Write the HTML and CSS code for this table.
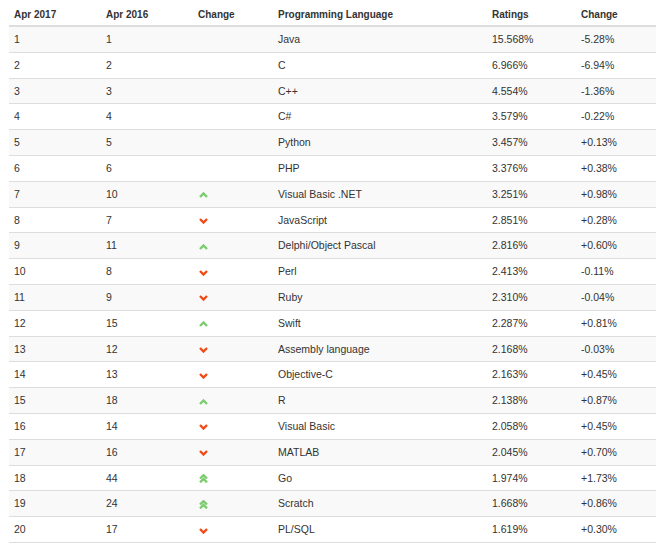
FILE: index.html
```html
<!DOCTYPE html>
<html>
<head>
<meta charset="utf-8">
<link rel="stylesheet" href="styles.css">
</head>
<body>
<div class="wrap">
<table class="rank">
<colgroup>
<col class="c1"><col class="c2"><col class="c3"><col class="c4"><col class="c5"><col class="c6">
</colgroup>
<thead>
<tr><th>Apr 2017</th><th>Apr 2016</th><th>Change</th><th>Programming Language</th><th>Ratings</th><th>Change</th></tr>
</thead>
<tbody>
<tr><td>1</td><td>1</td><td></td><td>Java</td><td>15.568%</td><td>-5.28%</td></tr>
<tr><td>2</td><td>2</td><td></td><td>C</td><td>6.966%</td><td>-6.94%</td></tr>
<tr><td>3</td><td>3</td><td></td><td>C++</td><td>4.554%</td><td>-1.36%</td></tr>
<tr><td>4</td><td>4</td><td></td><td>C#</td><td>3.579%</td><td>-0.22%</td></tr>
<tr><td>5</td><td>5</td><td></td><td>Python</td><td>3.457%</td><td>+0.13%</td></tr>
<tr><td>6</td><td>6</td><td></td><td>PHP</td><td>3.376%</td><td>+0.38%</td></tr>
<tr><td>7</td><td>10</td><td><svg class="ico up" viewBox="0 0 9 6"><path d="M1 5 L4.5 1.5 L8 5"/></svg></td><td>Visual Basic .NET</td><td>3.251%</td><td>+0.98%</td></tr>
<tr><td>8</td><td>7</td><td><svg class="ico down" viewBox="0 0 9 6"><path d="M1 1 L4.5 4.5 L8 1"/></svg></td><td>JavaScript</td><td>2.851%</td><td>+0.28%</td></tr>
<tr><td>9</td><td>11</td><td><svg class="ico up" viewBox="0 0 9 6"><path d="M1 5 L4.5 1.5 L8 5"/></svg></td><td>Delphi/Object Pascal</td><td>2.816%</td><td>+0.60%</td></tr>
<tr><td>10</td><td>8</td><td><svg class="ico down" viewBox="0 0 9 6"><path d="M1 1 L4.5 4.5 L8 1"/></svg></td><td>Perl</td><td>2.413%</td><td>-0.11%</td></tr>
<tr><td>11</td><td>9</td><td><svg class="ico down" viewBox="0 0 9 6"><path d="M1 1 L4.5 4.5 L8 1"/></svg></td><td>Ruby</td><td>2.310%</td><td>-0.04%</td></tr>
<tr><td>12</td><td>15</td><td><svg class="ico up" viewBox="0 0 9 6"><path d="M1 5 L4.5 1.5 L8 5"/></svg></td><td>Swift</td><td>2.287%</td><td>+0.81%</td></tr>
<tr><td>13</td><td>12</td><td><svg class="ico down" viewBox="0 0 9 6"><path d="M1 1 L4.5 4.5 L8 1"/></svg></td><td>Assembly language</td><td>2.168%</td><td>-0.03%</td></tr>
<tr><td>14</td><td>13</td><td><svg class="ico down" viewBox="0 0 9 6"><path d="M1 1 L4.5 4.5 L8 1"/></svg></td><td>Objective-C</td><td>2.163%</td><td>+0.45%</td></tr>
<tr><td>15</td><td>18</td><td><svg class="ico up" viewBox="0 0 9 6"><path d="M1 5 L4.5 1.5 L8 5"/></svg></td><td>R</td><td>2.138%</td><td>+0.87%</td></tr>
<tr><td>16</td><td>14</td><td><svg class="ico down" viewBox="0 0 9 6"><path d="M1 1 L4.5 4.5 L8 1"/></svg></td><td>Visual Basic</td><td>2.058%</td><td>+0.45%</td></tr>
<tr><td>17</td><td>16</td><td><svg class="ico down" viewBox="0 0 9 6"><path d="M1 1 L4.5 4.5 L8 1"/></svg></td><td>MATLAB</td><td>2.045%</td><td>+0.70%</td></tr>
<tr><td>18</td><td>44</td><td><svg class="ico dbl" viewBox="0 0 9 9"><path d="M1 4.5 L4.5 1.2 L8 4.5 M1 8.3 L4.5 5 L8 8.3"/></svg></td><td>Go</td><td>1.974%</td><td>+1.73%</td></tr>
<tr><td>19</td><td>24</td><td><svg class="ico dbl" viewBox="0 0 9 9"><path d="M1 4.5 L4.5 1.2 L8 4.5 M1 8.3 L4.5 5 L8 8.3"/></svg></td><td>Scratch</td><td>1.668%</td><td>+0.86%</td></tr>
<tr><td>20</td><td>17</td><td><svg class="ico down" viewBox="0 0 9 6"><path d="M1 1 L4.5 4.5 L8 1"/></svg></td><td>PL/SQL</td><td>1.619%</td><td>+0.30%</td></tr>
</tbody>
</table>
</div>
</body>
</html>
```
FILE: styles.css
```css
html, body {
  margin: 0;
  padding: 0;
  background: #fff;
}
.wrap {
  padding: 0 9px;
}
.rank {
  width: 647px;
  border-collapse: collapse;
  table-layout: fixed;
  font-family: "Liberation Sans", Arial, sans-serif;
  font-size: 10.5px;
  color: #333;
}
.c1 { width: 92px; }
.c2 { width: 92px; }
.c3 { width: 80px; }
.c4 { width: 214px; }
.c5 { width: 89px; }
.c6 { width: 80px; }
.rank th {
  text-align: left;
  font-weight: bold;
  font-size: 10px;
  padding: 8px 5px 3px;
  line-height: 14px;
  border-bottom: 2px solid #ddd;
}
.rank td {
  padding: 5px 5px;
  line-height: 14.8px;
  border-bottom: 1px solid #ddd;
  vertical-align: middle;
}
.rank tbody tr:nth-child(odd) td {
  background: #f9f9f9;
}
.ico {
  display: block;
  width: 9px;
  height: 6px;
  margin-left: 1px;
  margin-top: 2px;
  fill: none;
  stroke-width: 2.4;
  stroke-linecap: butt;
  stroke-linejoin: miter;
}
.ico.dbl {
  height: 9px;
  margin-top: 1px;
}
.up path, .dbl path { stroke: #7ccb6f; }
.down path { stroke: #f24a16; }
```
